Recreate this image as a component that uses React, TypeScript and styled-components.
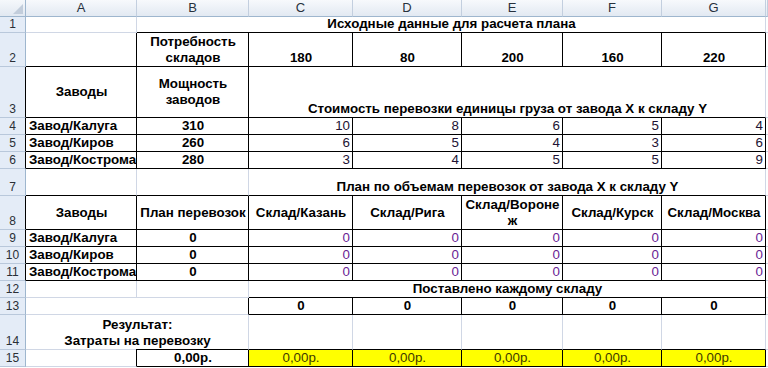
import { FC, Fragment } from "react";
import styled, { createGlobalStyle, css } from "styled-components";

const GRID = "#d0d7e5";
const HEAD_LINE = "#9eb6ce";

const GlobalStyle = createGlobalStyle`
  html,
  body {
    margin: 0;
    padding: 0;
    background: #fff;
  }
  body {
    font-family: "Liberation Sans", Arial, sans-serif;
  }
`;

const Sheet = styled.div`
  display: grid;
  grid-template-columns: 26px 111px 112px 104px 109px 101px 99px 104px 2px;
  grid-template-rows: 17px 16px 34px 51px 17px 17px 17px 27px 34px 17px 17px 17px 17px 17px 35px 17px;
  width: 768px;
  height: 368px;
  overflow: hidden;
  font-family: "Liberation Sans", Arial, sans-serif;
  font-size: 13.33px;
  line-height: 16px;
  color: #000;
  background: #fff;
`;

const Corner = styled.div`
  display: flex;
  align-items: flex-end;
  justify-content: flex-end;
  padding: 0 2px 2px 0;
  background: linear-gradient(#f5f8fb, #e1e8f1);
  border-right: 1px solid ${HEAD_LINE};
  border-bottom: 1px solid ${HEAD_LINE};
`;

const ColHead = styled.div`
  background: linear-gradient(#f7f9fc, #e2e9f2);
  border-right: 1px solid #c3cfdf;
  border-bottom: 1px solid ${HEAD_LINE};
  color: #27313d;
  font-size: 13px;
  line-height: 15px;
  text-align: center;
  overflow: hidden;
`;

const RowHead = styled.div<{ $edge?: boolean }>`
  display: flex;
  align-items: flex-end;
  justify-content: center;
  background: #e4ecf7;
  border-right: 1px solid ${(p) => (p.$edge ? "#000" : HEAD_LINE)};
  border-bottom: 1px solid #b9c8db;
  color: #2a2f36;
  font-size: 12px;
  line-height: 15px;
`;

type Align = "left" | "center" | "right";
type VAlign = "middle" | "bottom";
type Tone = "ink" | "cost" | "plan" | "money";

const toneColor: Record<Tone, string> = {
  ink: "#000",
  cost: "#221233",
  plan: "#6a2395",
  money: "#3f3a00",
};

const Cell = styled.div<{
  $span?: number;
  $align?: Align;
  $v?: VAlign;
  $bold?: boolean;
  $tone?: Tone;
  $fill?: boolean;
  $r?: boolean;
  $u?: boolean;
  $split?: boolean;
}>`
  grid-column: span ${(p) => p.$span ?? 1};
  display: flex;
  flex-direction: column;
  justify-content: ${(p) => (p.$v === "middle" ? "center" : "flex-end")};
  text-align: ${(p) => p.$align ?? "left"};
  padding: 0 2px 0 3px;
  white-space: pre;
  overflow: hidden;
  font-weight: ${(p) => (p.$bold ? 700 : 400)};
  color: ${(p) => toneColor[p.$tone ?? "ink"]};
  background: ${(p) => (p.$fill ? "#ffff00" : "transparent")};
  border-right: 1px solid ${(p) => (p.$r ? "#000" : GRID)};
  border-bottom: 1px solid ${(p) => (p.$u ? "#000" : GRID)};
  ${(p) =>
    p.$split &&
    css`
      border-bottom-color: transparent;
      background: linear-gradient(to right, ${GRID} 110px, #000 110px) left
        bottom / 100% 1px no-repeat border-box;
    `}
`;

const Pad = styled.div`
  border-bottom: 1px solid ${GRID};
`;

type C = {
  t?: string;
  s?: number;
  a?: Align;
  v?: VAlign;
  b?: boolean;
  tone?: Tone;
  fill?: boolean;
  r?: boolean;
  u?: boolean;
  split?: boolean;
};

type Row = { n: number; edge?: boolean; cells: C[] };

// bordered cell, bold and centred unless told otherwise
const box = (t: string, extra: C = {}): C => ({ t, a: "center", b: true, r: true, u: true, ...extra });

const factories: [string, string, number[]][] = [
  ["Завод/Калуга", "310", [10, 8, 6, 5, 4]],
  ["Завод/Киров", "260", [6, 5, 4, 3, 6]],
  ["Завод/Кострома", "280", [3, 4, 5, 5, 9]],
];

const stores = ["Склад/Казань", "Склад/Рига", "Склад/Вороне\nж", "Склад/Курск", "Склад/Москва"];

const rows: Row[] = [
  { n: 1, cells: [{}, { t: "Исходные данные для расчета плана", s: 6, a: "center", b: true, u: true }] },
  {
    n: 2,
    cells: [{ r: true, u: true }, box("Потребность\nскладов"), ...["180", "80", "200", "160", "220"].map((t) => box(t))],
  },
  {
    n: 3,
    edge: true,
    cells: [
      box("Заводы", { v: "middle" }),
      box("Мощность\nзаводов", { v: "middle" }),
      { t: "Стоимость перевозки единицы груза от завода X к складу Y", s: 5, a: "center", b: true, u: true },
    ],
  },
  ...factories.map(([name, cap, costs], i) => ({
    n: 4 + i,
    edge: true,
    cells: [
      box(name, { a: "left" }),
      box(cap),
      ...costs.map((c) => box(String(c), { a: "right", b: false, tone: "cost" as Tone })),
    ],
  })),
  {
    n: 7,
    cells: [{ u: true }, { u: true }, { t: "План по объемам перевозок от завода X к складу Y", s: 5, a: "center", b: true, u: true }],
  },
  {
    n: 8,
    edge: true,
    cells: [box("Заводы", { v: "middle" }), box("План перевозок", { v: "middle" }), ...stores.map((t) => box(t, { v: "middle" }))],
  },
  ...factories.map(([name], i) => ({
    n: 9 + i,
    edge: true,
    cells: [
      box(name, { a: "left" }),
      box("0"),
      ...stores.map(() => box("0", { a: "right", b: false, tone: "plan" as Tone })),
    ],
  })),
  { n: 12, cells: [{}, {}, { t: "Поставлено каждому складу", s: 5, a: "center", b: true, r: true, u: true }] },
  { n: 13, cells: [{ s: 2, r: true }, ...stores.map(() => box("0"))] },
  {
    n: 14,
    cells: [
      { t: "Результат:\nЗатраты на перевозку", s: 2, a: "center", b: true, split: true },
      ...stores.map(() => ({ u: true })),
    ],
  },
  {
    n: 15,
    cells: [{ r: true }, box("0,00р."), ...stores.map(() => box("0,00р.", { b: false, tone: "money", fill: true }))],
  },
];

const letters = ["A", "B", "C", "D", "E", "F", "G", ""];

const App: FC = () => {
  return (
    <>
      <GlobalStyle />
      <Sheet>
        <Corner>
          <svg width="10" height="10" viewBox="0 0 10 10">
            <polygon points="10,0 10,10 0,10" fill="#c2cddb" />
          </svg>
        </Corner>
        {letters.map((l, i) => (
          <ColHead key={i}>{l}</ColHead>
        ))}
        {rows.map((row) => (
          <Fragment key={row.n}>
            <RowHead $edge={row.edge}>{row.n}</RowHead>
            {row.cells.map((c, i) => (
              <Cell
                key={i}
                $span={c.s}
                $align={c.a}
                $v={c.v}
                $bold={c.b}
                $tone={c.tone}
                $fill={c.fill}
                $r={c.r}
                $u={c.u}
                $split={c.split}
              >
                {c.t}
              </Cell>
            ))}
            <Pad />
          </Fragment>
        ))}
      </Sheet>
    </>
  );
};

export default App;
